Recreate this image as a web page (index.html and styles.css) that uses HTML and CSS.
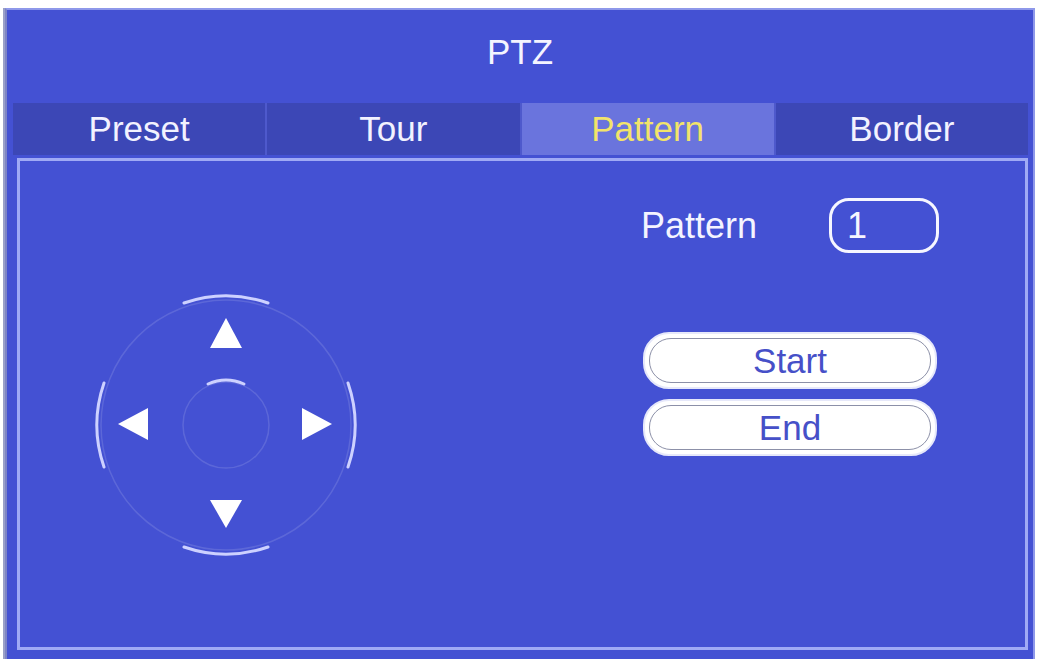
FILE: index.html
```html
<!DOCTYPE html>
<html lang="en">
<head>
<meta charset="utf-8">
<title>PTZ</title>
<link rel="stylesheet" href="styles.css">
</head>
<body>
<div class="panel">
  <div class="title">PTZ</div>
  <div class="tabs">
    <div class="tab">Preset</div>
    <div class="tab">Tour</div>
    <div class="tab active">Pattern</div>
    <div class="tab">Border</div>
  </div>
  <div class="frame">
    <div class="dpad">
      <svg width="264" height="264" viewBox="0 0 264 264">
        <!-- dim guide rings -->
        <circle cx="132" cy="132" r="125" fill="none" stroke="rgba(255,255,255,0.13)" stroke-width="1.5"/>
        <circle cx="132" cy="132" r="43" fill="none" stroke="rgba(255,255,255,0.13)" stroke-width="1.5"/>
        <!-- bright arc segments -->
        <g fill="none" stroke="#cdd1ff" stroke-width="3" stroke-linecap="round">
          <path d="M90 10 A129 129 0 0 1 174 10"/>
          <path d="M90 254 A129 129 0 0 0 174 254"/>
          <path d="M10 90 A129 129 0 0 0 10 174"/>
          <path d="M254 90 A129 129 0 0 1 254 174"/>
          <path d="M114 91 A45 45 0 0 1 150 91"/>
        </g>
        <!-- direction arrows -->
        <g fill="#ffffff">
          <polygon points="132,25 116,55 148,55"/>
          <polygon points="116,207 148,207 132,235"/>
          <polygon points="24,131 54,115 54,147"/>
          <polygon points="238,131 208,115 208,147"/>
        </g>
      </svg>
    </div>
    <div class="controls">
      <div class="field">
        <span class="label">Pattern</span>
        <div class="input">1</div>
      </div>
      <div class="buttons">
        <div class="btn">Start</div>
        <div class="btn">End</div>
      </div>
    </div>
  </div>
</div>
</body>
</html>
```

FILE: styles.css
```css
html, body {
  margin: 0;
  padding: 0;
  background: #ffffff;
}

body {
  font-family: "Liberation Sans", Arial, sans-serif;
  padding: 8px 5px 0 3px;
  height: 659px;
  box-sizing: border-box;
  overflow: hidden;
}

.panel {
  background: #4451d3;
  border-left: 2px solid #7d84c4;
  border-top: 2px solid #8e98ea;
  border-right: 2px solid #8e98ea;
  box-shadow: -2px 0 0 #9aa0c8;
  margin-left: 2px;
  height: 651px;
  box-sizing: border-box;
  display: flex;
  flex-direction: column;
}

.title {
  height: 93px;
  padding-bottom: 10px;
  box-sizing: border-box;
  display: flex;
  align-items: center;
  justify-content: center;
  color: #f4f4ff;
  font-size: 35px;
}

.tabs {
  display: flex;
  gap: 2px;
  margin: 0 5px 0 6px;
  background: #4e59cc;
  height: 52px;
}

.tab {
  flex: 1;
  background: #3c47b6;
  color: #f2f2ff;
  font-size: 35px;
  line-height: 52px;
  text-align: center;
}

.tab.active {
  background: #6a74dd;
  color: #f2e46a;
}

.frame {
  margin: 3px 5px 0 10px;
  height: 492px;
  box-sizing: border-box;
  border: 3px solid #a0aaf5;
  display: flex;
  align-items: flex-start;
}

.dpad {
  margin: 132px 0 0 74px;
  width: 264px;
  height: 264px;
}

.dpad svg {
  display: block;
}

.controls {
  margin: 37px 0 0 282px;
  display: flex;
  flex-direction: column;
}

.field {
  display: flex;
  align-items: center;
  height: 55px;
}

.label {
  color: #f4f4ff;
  font-size: 36px;
  width: 188px;
  margin-left: 1px;
}

.input {
  width: 110px;
  height: 55px;
  box-sizing: border-box;
  border: 3px solid #f6f6ff;
  border-radius: 20px;
  color: #f6f6ff;
  font-size: 36px;
  line-height: 49px;
  padding-left: 15px;
}

.buttons {
  margin-top: 79px;
  display: flex;
  flex-direction: column;
  gap: 10px;
}

.btn {
  position: relative;
  width: 294px;
  height: 57px;
  box-sizing: border-box;
  margin-left: 3px;
  background: #ffffff;
  border: 2px solid #e6e8fa;
  border-radius: 26px;
  color: #4650c8;
  font-size: 35px;
  line-height: 53px;
  text-align: center;
}

/* thin inner outline of the button face */
.btn::after {
  content: "";
  position: absolute;
  inset: 4px;
  border: 1.5px solid #8c90a8;
  border-radius: 22px;
  pointer-events: none;
}
```
